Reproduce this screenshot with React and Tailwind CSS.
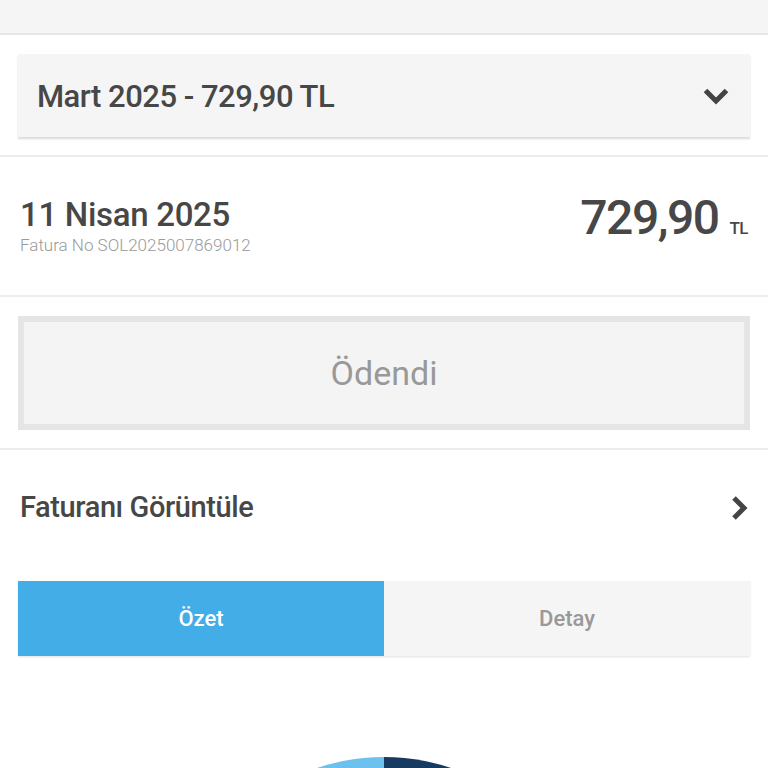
import React from 'react';

function ChevronDown() {
  return (
    <svg width="28" height="18" viewBox="0 0 28 18" className="text-[#444]">
      <path d="M3.5 3.5 L14 14 L24.5 3.5" fill="none" stroke="currentColor" strokeWidth="5" strokeLinejoin="miter" />
    </svg>
  );
}

function ChevronRight() {
  return (
    <svg width="18" height="26" viewBox="0 0 18 26" className="text-[#444]">
      <path d="M4 3 L14 13 L4 23" fill="none" stroke="currentColor" strokeWidth="5" strokeLinejoin="miter" />
    </svg>
  );
}

export default function App() {
  return (
    <div className="min-h-screen bg-white font-['Roboto',sans-serif] text-[#444]">
      <div className="h-[35px] bg-[#f5f5f5] border-b-2 border-[#e6e6e6]" />

      <div className="px-[18px] pt-[19px] pb-[18px] border-b-2 border-[#ececec]">
        <div className="h-[83px] bg-[#f5f5f5] shadow-[0_2px_2px_rgba(0,0,0,0.15)] flex items-center justify-between pl-[19px] pr-[20px]">
          <span className="text-[31px] font-medium tracking-[-0.5px] text-[#474747] pt-[3px]">Mart 2025 - 729,90 TL</span>
          <ChevronDown />
        </div>
      </div>

      <div className="h-[140px] px-[20px] flex justify-between items-start pt-[37px] border-b-2 border-[#ececec]">
        <div className="flex flex-col">
          <span className="text-[33px] font-medium tracking-[-0.3px] leading-[42px] text-[#474747]">11 Nisan 2025</span>
          <span className="text-[17px] font-light leading-[17px] mt-[1px] text-[#9a9a9a]">Fatura No SOL2025007869012</span>
        </div>
        <div className="flex items-end gap-[11px] -mt-[4px]">
          <span className="text-[48px] font-medium tracking-[-1.5px] leading-[56px] text-[#474747]">729,90</span>
          <span className="text-[17px] font-medium tracking-[-0.5px] leading-[16px] mb-[9px] pb-[1px] text-[#474747]">TL</span>
        </div>
      </div>

      <div className="px-[18px] pt-[19px] pb-[18px] border-b-2 border-[#ececec]">
        <div className="h-[114px] border-[6px] border-[#e5e5e5] bg-[#f4f4f4] flex items-center justify-center">
          <span className="text-[34px] font-normal text-[#999]">Ödendi</span>
        </div>
      </div>

      <div className="h-[112px] px-[20px] pt-[3px] flex items-center justify-between">
        <span className="text-[29px] font-medium tracking-[-0.4px] text-[#474747]">Faturanı Görüntüle</span>
        <ChevronRight />
      </div>

      <div className="px-[18px] mt-[19px]">
        <div className="grid grid-cols-2 h-[75px] shadow-[0_1px_2px_rgba(0,0,0,0.12)]">
          <div className="bg-[#42ade6] flex items-center justify-center">
            <span className="text-[22px] font-medium text-white">Özet</span>
          </div>
          <div className="bg-[#f5f5f5] flex items-center justify-center">
            <span className="text-[22px] font-medium text-[#999]">Detay</span>
          </div>
        </div>
      </div>

      <div className="flex justify-center pt-[101px] overflow-hidden h-[112px]">
        <svg width="420" height="420" viewBox="0 0 420 420" className="shrink-0">
          <path d="M210 210 L210 0 A210 210 0 0 1 420 210 L210 210 Z" fill="#173a61" />
          <path d="M210 210 L210 0 A210 210 0 1 0 420 210 L210 210 Z" fill="#6cc1ee" />
        </svg>
      </div>
    </div>
  );
}
